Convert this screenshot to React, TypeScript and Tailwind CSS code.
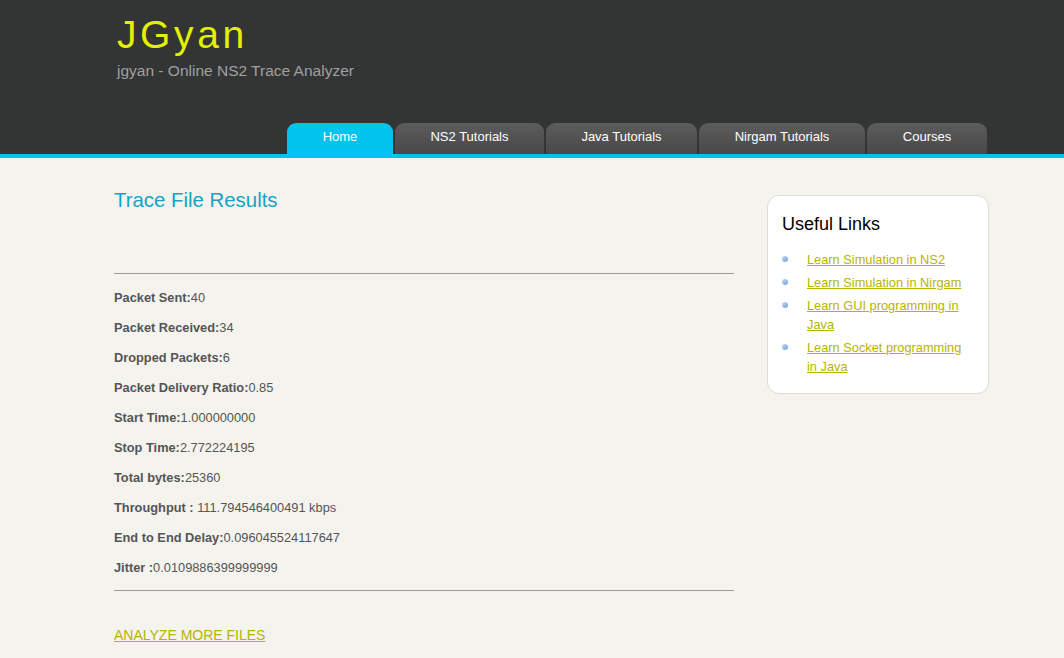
import React from "react";

const tabs = [
  { label: "Home", width: "w-[106px]", active: true },
  { label: "NS2 Tutorials", width: "w-[149px]" },
  { label: "Java Tutorials", width: "w-[151px]" },
  { label: "Nirgam Tutorials", width: "w-[166px]" },
  { label: "Courses", width: "w-[120px]" },
];

const results: [string, string][] = [
  ["Packet Sent:", "40"],
  ["Packet Received:", "34"],
  ["Dropped Packets:", "6"],
  ["Packet Delivery Ratio:", "0.85"],
  ["Start Time:", "1.000000000"],
  ["Stop Time:", "2.772224195"],
  ["Total bytes:", "25360"],
  ["Throughput : ", "111.794546400491 kbps"],
  ["End to End Delay:", "0.096045524117647"],
  ["Jitter :", "0.0109886399999999"],
];

const links = [
  "Learn Simulation in NS2",
  "Learn Simulation in Nirgam",
  "Learn GUI programming in Java",
  "Learn Socket programming in Java",
];

export default function App() {
  return (
    <div className="min-h-[658px] bg-[#f4f3ed] font-['Liberation_Sans',Arial,sans-serif]">
      <header className="bg-[#333434] border-b-4 border-[#00c4ed]">
        <div className="h-[123px] pl-[117px] pt-[12px]">
          <h1 className="text-[39px] leading-[46px] tracking-[3.6px] text-[#e3f000]">JGyan</h1>
          <p className="text-[15.5px] leading-[18px] text-[#a0a0a0] mt-[4px]">
            jgyan - Online NS2 Trace Analyzer
          </p>
        </div>
        <nav className="flex gap-[2px] pl-[287px] h-[31px]">
          {tabs.map((t) => (
            <div
              key={t.label}
              className={`${t.width} rounded-t-[9px] flex justify-center pt-[4px] text-[13px] text-white ${
                t.active ? "bg-[#00c4ed]" : "bg-gradient-to-b from-[#5c5c5c] to-[#484848]"
              }`}
            >
              {t.label}
            </div>
          ))}
        </nav>
      </header>

      <div className="flex pl-[114px] pt-[30px]">
        <main className="w-[620px]">
          <h2 className="text-[20.4px] leading-[24px] text-[#15a3c7]">Trace File Results</h2>
          <hr className="mt-[61px] border-t border-[#9a9a9a]" />
          <div className="pt-[16px] text-[12.8px] text-[#555]">
            {results.map(([k, v]) => (
              <p key={k} className="h-[30px] leading-[16px]">
                <b className="font-bold">{k}</b>
                {v}
              </p>
            ))}
          </div>
          <hr className="border-t border-[#9a9a9a]" />
          <a href="#" className="block mt-[34px] text-[14px] text-[#b5b500] underline">
            ANALYZE MORE FILES
          </a>
        </main>

        <aside className="ml-[33px] mt-[7px] w-[222px] h-[199px] bg-white border border-[#dcdcd6] rounded-[12px] pl-[14px] pt-[16px]">
          <h3 className="text-[18px] leading-[24px] text-black">Useful Links</h3>
          <ul className="mt-[14px] flex flex-col gap-[4px]">
            {links.map((l) => (
              <li key={l} className="flex items-start">
                <span className="mt-[6px] w-[6px] h-[6px] rounded-full bg-gradient-to-br from-[#c5dcf5] to-[#6f9ed8] shrink-0" />
                <a href="#" className="ml-[19px] w-[160px] text-[12.8px] leading-[19px] text-[#b5b500] underline">
                  {l}
                </a>
              </li>
            ))}
          </ul>
        </aside>
      </div>
    </div>
  );
}
